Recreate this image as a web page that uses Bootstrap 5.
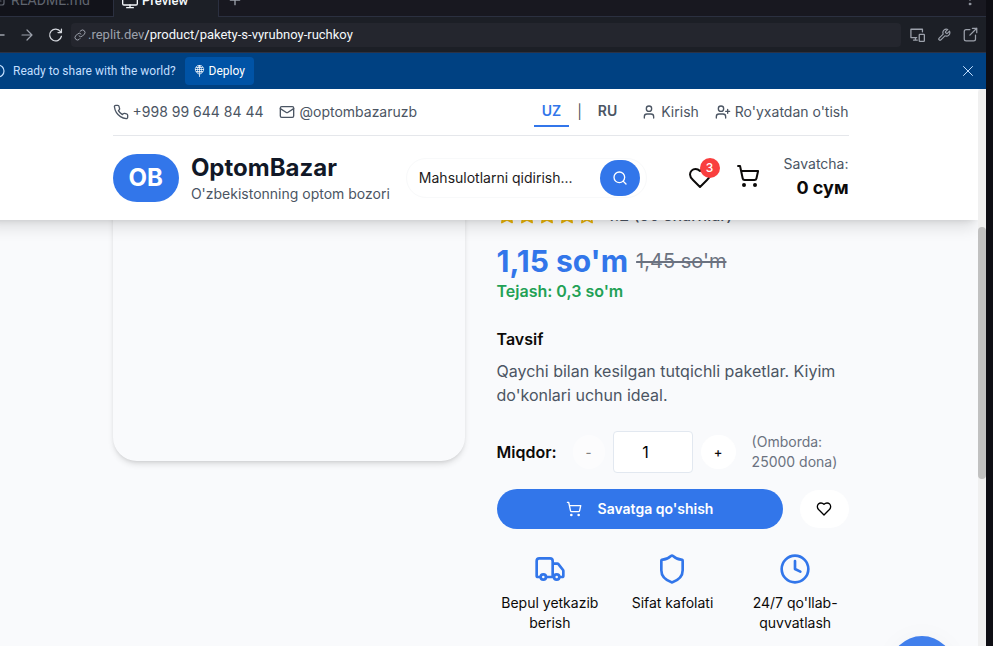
<!DOCTYPE html>
<html lang="uz">
<head>
<meta charset="utf-8">
<meta name="viewport" content="width=device-width, initial-scale=1">
<title>OptomBazar</title>
<link rel="stylesheet" href="https://cdn.jsdelivr.net/npm/bootstrap@5.3.0/dist/css/bootstrap.min.css">
<style>
:root { --brand: #3276ea; --ink: #111827; --muted: #4b5563; --chrome: #1c1f26; }
body { font-family: Inter, "Liberation Sans", sans-serif; font-size: 16px; line-height: 24px; color: #0c0a09; background: #0e0e14; }
svg { display: block; flex: none; fill: none; stroke: currentColor; stroke-width: 2; stroke-linecap: round; stroke-linejoin: round; }
svg .solid { fill: currentColor; }
button { font-family: inherit; }
a { color: inherit; text-decoration: none; }
.bare { background: none; border: 0; padding: 0; color: inherit; }
.ide { margin-right: 7px; font-family: Roboto, "Liberation Sans", sans-serif; }
.tab-strip { height: 17px; background: #181820; border-bottom: 1px solid #2b3040; color: #9ca1ab; font-size: 14px; line-height: 16px; }
.tab { height: 32px; padding-bottom: 8px; }
.tab-file { width: 113px; color: #60656f; background: #12131a; }
.tab-live { width: 106px; height: 33px; margin-bottom: -1px; padding-bottom: 8px; background: var(--chrome); color: #f5f9fc; border: solid #2b3040; border-width: 0 1px; }
.tab-live span { font-size: 13px; font-weight: 500; }
.address { height: 36px; background: var(--chrome); border-bottom: 1px solid #2b3245; color: #9ca1ab; }
.reload { color: #d5d8de; margin: 0 8px 0 15px; }
.url { height: 24px; background: #24262e; border-radius: 4px; padding: 0 3px; font-size: 13px; line-height: 24px; }
.url b { color: #f5f9fc; font-weight: 400; }
.url svg { margin-right: 2px; }
.banner { height: 36px; background: #004182; color: #c2dfff; font-size: 12px; line-height: 16px; }
.deploy { height: 28px; background: #0053a6; border: 0; border-radius: 4px; color: #fff; padding: 0 9px; margin-left: 9px; }
.viewport { min-height: 0; margin-right: 7px; background: #f9fafc; }
.page { margin-left: -17px; }
.track { width: 8px; background: #f0f0f0; border-radius: 4px 0 0 0; padding-top: 138px; }
.thumb { height: 252px; border-radius: 4px; background: #c1c1c1; }
.wrap { max-width: 768px; padding: 0 16px; margin: 0 auto; }
.site-head { background: #fff; box-shadow: 0 10px 15px -3px rgba(0,0,0,.12), 0 4px 6px -4px rgba(0,0,0,.12); z-index: 2; }
.t14 { font-size: 14px; line-height: 20px; }
.muted { color: var(--muted); }
.soft { color: #6b7280; }
.topbar { border-bottom: 1px solid #e5e7eb; }
.lang { border-bottom: 2px solid transparent; font-weight: 600; }
.lang.on { color: var(--brand); border-color: var(--brand); }
.logo { background: var(--brand); color: #fff; font-size: 24px; line-height: 32px; font-weight: 700; border-radius: 24px; padding: 8px 16px; }
.brand-name { font-size: 24px; line-height: 32px; font-weight: 700; color: var(--ink); margin: 0; }
.search { width: 241px; height: 40px; border: 1px solid #f8f9fa; border-radius: 20px; padding: 0 6px 0 12px; margin-left: 16px; }
.search input { border: 0; outline: 0; min-width: 0; padding: 0; background: none; color: #0c0a09; }
.search input::placeholder { color: #1d1b1b; opacity: 1; }
.go { flex: none; width: 40px; height: 36px; border: 0; border-radius: 18px; background: var(--brand); color: #fff; }
.count { position: absolute; top: -8px; right: -8px; width: 20px; height: 20px; border-radius: 10px; background: #f93e3e; color: #fff; font-size: 12px; line-height: 20px; font-weight: 500; }
.sum { font-size: 18px; line-height: 28px; font-weight: 700; }
.product { display: grid; grid-template-columns: 1fr 1fr; gap: 32px; margin-top: -17px; }
.photo { height: 258px; border-radius: 0 0 24px 24px; box-shadow: 0 4px 6px -1px rgba(0,0,0,.12), 0 2px 4px -2px rgba(0,0,0,.12); }
.stars { color: #eab308; }
.stars .full { fill: #facc15; }
.price { font-size: 30px; line-height: 36px; font-weight: 700; color: var(--brand); }
.old { font-size: 20px; line-height: 28px; color: #6b7280; }
.save { color: #22a155; font-weight: 600; }
.heading { font-size: 16px; line-height: 24px; font-weight: 600; margin: 0; }
.round { width: 35px; height: 34px; border: 0; border-radius: 17px; background: #fff; font-size: 13px; font-weight: 500; color: #0c0a09; padding: 0; }
.round:disabled { width: 32px; opacity: .5; }
.qty { width: 80px; height: 42px; border: 1px solid #e2e8f0; border-radius: 4px; background: #fff; padding: 0 14px 0 0; }
.buy { height: 40px; border: 0; border-radius: 20px; background: var(--brand); color: #fff; font-weight: 600; }
.wish { width: 49px; height: 38px; margin-left: 17px; border: 0; border-radius: 19px; background: #fff; padding: 0; }
.perks { display: grid; grid-template-columns: repeat(3, 1fr); gap: 16px; }
.perks svg { color: var(--brand); }
.chat { position: absolute; right: 24px; bottom: -54px; width: 64px; height: 64px; border: 0; border-radius: 32px; background: #417fec; box-shadow: 0 0 24px rgba(0,0,0,.03); }
</style>
<script src="https://cdn.jsdelivr.net/npm/bootstrap@5.3.0/dist/js/bootstrap.bundle.min.js"></script>
</head>
<body>
<div class="d-flex flex-column vh-100 overflow-hidden">
  <div class="ide flex-shrink-0">
    <div class="tab-strip d-flex align-items-end">
      <div class="tab tab-file d-flex align-items-end"><svg width="7" height="16" viewBox="0 0 7 16" class="me-1"><path stroke-width="1.200" d="M0 2h2a2 2 0 0 1 2 2v7a2 2 0 0 1-2 2H0M0 6h1M0 9h1"/></svg><span>README.md</span></div>
      <div class="tab tab-live d-flex align-items-end ps-1">
        <svg width="16" height="16" viewBox="0 0 24 24" class="ms-1 me-1"><rect x="1" y="3" width="22" height="15" rx="2"/><path d="M7 22h10M12 18v4"/></svg><span>Preview</span></div>
      <div class="tab d-flex align-items-end ps-2"><svg width="16" height="16" viewBox="0 0 24 24"><path d="M12 5v14M5 12h14"/></svg></div>
      <div class="tab d-flex align-items-end ms-auto pe-2"><svg width="16" height="16" viewBox="0 0 24 24"><g class="solid" stroke-width="1"><circle cx="12" cy="4" r="1.5"/><circle cx="12" cy="11" r="1.5"/><circle cx="12" cy="18" r="1.5"/></g></svg></div>
    </div>
    <div class="address d-flex align-items-center pe-2">
      <svg width="5" height="16" viewBox="0 0 5 16"><path d="M0 8h4" stroke-width="1.5"/></svg>
      <button class="bare ms-3" aria-label="Forward"><svg width="12" height="14" viewBox="0 0 12 14"><path stroke-width="1.200" d="M1 7h10M6 2l5 5-5 5"/></svg></button>
      <button class="bare reload" aria-label="Reload"><svg width="15" height="16" viewBox="0 0 24 24"><path d="M20 6.500A9.500 9.500 0 1 0 21.500 14M21.500 2.500V8H16"/></svg></button>
      <div class="url d-flex align-items-center flex-grow-1 me-2"><svg width="12" height="12" viewBox="0 0 24 24"><path d="M10 14a5 5 0 0 0 7 0l4-4a5 5 0 0 0-7-7l-2 2M14 10a5 5 0 0 0-7 0l-4 4a5 5 0 0 0 7 7l2-2"/></svg><span>.replit.dev<b>/product/pakety-s-vyrubnoy-ruchkoy</b></span></div>
      <div class="d-flex gap-2 align-items-center">
        <button class="bare" aria-label="Devices"><svg width="16" height="16" viewBox="0 0 25 24"><path d="M12 16H3V3h18v4M7 20h6M10 16v4"/><rect x="16" y="11" width="8" height="11" rx="1"/></svg></button>
        <button class="bare mx-1" aria-label="Tools"><svg width="14" height="14" viewBox="0 0 24 24"><path d="M14.700 6.300a1 1 0 0 0 0 1.400l1.600 1.600a1 1 0 0 0 1.400 0l3.800-3.800a6 6 0 0 1-7.900 7.900l-6.900 6.900a2.100 2.100 0 0 1-3-3l6.900-6.900a6 6 0 0 1 7.900-7.900z"/></svg></button>
        <button class="bare" aria-label="Open"><svg width="15" height="15" viewBox="0 0 24 24"><path d="M11 4H5a3 3 0 0 0-3 3v12a3 3 0 0 0 3 3h12a3 3 0 0 0 3-3v-6M15 2h7v7M22 2L11 13"/></svg></button>
      </div>
    </div>
    <div class="banner d-flex align-items-center pe-2">
      <svg width="5" height="14" viewBox="0 0 5 14" class="me-2"><circle cx="-2" cy="7" r="6" stroke-width="1.200"/></svg>
      <span>Ready to share with the world?</span>
      <button class="deploy d-flex align-items-center"><svg width="11" height="12" viewBox="0 0 22 24" class="me-1"><path stroke-width="1.500" d="M7 16.500a8.500 8.500 0 1 1 8 0M3 9h16M11 1v22M9 18C6 12 6 5 11 1M13 18c3-6 3-13-2-17M5 5h12M5 13h12"/></svg>Deploy</button>
      <button class="bare ms-auto me-1" aria-label="Close"><svg width="12" height="12" viewBox="0 0 24 24"><path d="M3 3l18 18M21 3L3 21"/></svg></button>
    </div>
  </div>

  <div class="viewport d-flex flex-grow-1">
    <div class="position-relative flex-grow-1 overflow-hidden">
      <div class="page">
        <header class="site-head position-relative">
          <div class="wrap">
            <div class="topbar d-flex justify-content-between align-items-center py-2 t14 muted">
              <div class="d-flex gap-3">
                <a href="#" class="d-flex align-items-center gap-1"><svg width="16" height="16" viewBox="0 0 24 24"><path d="M22 16.920v3a2 2 0 0 1-2.180 2 19.790 19.790 0 0 1-8.630-3.070 19.500 19.500 0 0 1-6-6 19.790 19.790 0 0 1-3.070-8.670A2 2 0 0 1 4.110 2h3a2 2 0 0 1 2 1.720c.127.960.361 1.903.700 2.810a2 2 0 0 1-.450 2.110L8.090 9.910a16 16 0 0 0 6 6l1.270-1.270a2 2 0 0 1 2.110-.450c.907.339 1.850.573 2.810.700A2 2 0 0 1 22 16.920z"/></svg>+998 99 644 84 44</a>
                <a href="#" class="d-flex align-items-center gap-1"><svg width="16" height="16" viewBox="0 0 24 24"><rect x="2" y="4" width="20" height="16" rx="2"/><path d="m22 7-8.970 5.700a1.940 1.940 0 0 1-2.060 0L2 7"/></svg>@optombazaruzb</a>
              </div>
              <div class="d-flex gap-3 align-items-center">
                <div class="d-flex gap-2 align-items-center">
                  <a href="#" class="lang on px-2 py-1">UZ</a><span>|</span><a href="#" class="lang px-2 py-1">RU</a>
                </div>
                <a href="#" class="d-flex align-items-center gap-1"><svg width="16" height="16" viewBox="0 0 24 24"><path d="M19 21v-2a4 4 0 0 0-4-4H9a4 4 0 0 0-4 4v2"/><circle cx="12" cy="7" r="4"/></svg>Kirish</a>
                <a href="#" class="d-flex align-items-center gap-1"><svg width="16" height="16" viewBox="0 0 24 24"><path d="M16 21v-2a4 4 0 0 0-4-4H6a4 4 0 0 0-4 4v2M19 8v6M22 11h-6"/><circle cx="9" cy="7" r="4"/></svg>Ro'yxatdan o'tish</a>
              </div>
            </div>
            <div class="d-flex align-items-center py-3">
              <a href="#" class="logo">OB</a>
              <div class="ms-2 ps-1 text-nowrap"><h1 class="brand-name">OptomBazar</h1><div class="t14 muted">O'zbekistonning optom bozori</div></div>
              <form class="search d-flex align-items-center">
                <input type="text" class="t14 flex-grow-1" placeholder="Mahsulotlarni qidirish..." aria-label="Mahsulotlarni qidirish">
                <button type="button" class="go d-flex align-items-center justify-content-center p-0" aria-label="Qidirish"><svg width="16" height="16" viewBox="0 0 24 24"><circle cx="11" cy="11" r="8"/><path d="m21 21-4.300-4.300"/></svg></button>
              </form>
              <div class="d-flex align-items-center gap-4 ms-auto">
                <button class="bare position-relative" aria-label="Sevimlilar"><svg width="24" height="24" viewBox="0 0 24 24"><path d="M19 14c1.490-1.460 3-3.210 3-5.500A5.500 5.500 0 0 0 16.500 3c-1.760 0-3 .500-4.500 2-1.500-1.500-2.740-2-4.500-2A5.500 5.500 0 0 0 2 8.500c0 2.300 1.500 4.050 3 5.500l7 7Z"/></svg><span class="count">3</span></button>
                <button class="bare pb-1" aria-label="Savatcha"><svg width="24" height="24" viewBox="0 0 24 24"><circle cx="8" cy="21" r="1"/><circle cx="19" cy="21" r="1"/><path d="M2.050 2.050h2l2.660 12.420a2 2 0 0 0 2 1.580h9.780a2 2 0 0 0 1.950-1.570l1.650-7.430H5.120"/></svg></button>
                <div class="text-end"><div class="t14 muted">Savatcha:</div><div class="sum">0 сум</div></div>
              </div>
            </div>
          </div>
        </header>

        <main class="wrap product">
          <div class="photo"></div>
          <div>
            <div class="d-flex align-items-center mb-3">
              <div class="stars d-flex me-2">
                <svg width="20" height="20" viewBox="0 0 24 24" class="full"><path d="M12 2l3.090 6.260L22 9.270l-5 4.870 1.180 6.880L12 17.770l-6.180 3.250L7 14.140 2 9.270l6.910-1.010z"/></svg>
                <svg width="20" height="20" viewBox="0 0 24 24" class="full"><path d="M12 2l3.090 6.260L22 9.270l-5 4.870 1.180 6.880L12 17.770l-6.180 3.250L7 14.140 2 9.270l6.910-1.010z"/></svg>
                <svg width="20" height="20" viewBox="0 0 24 24" class="full"><path d="M12 2l3.090 6.260L22 9.270l-5 4.870 1.180 6.880L12 17.770l-6.180 3.250L7 14.140 2 9.270l6.910-1.010z"/></svg>
                <svg width="20" height="20" viewBox="0 0 24 24" class="full"><path d="M12 2l3.090 6.260L22 9.270l-5 4.870 1.180 6.880L12 17.770l-6.180 3.250L7 14.140 2 9.270l6.910-1.010z"/></svg>
                <svg width="20" height="20" viewBox="0 0 24 24"><path d="M12 2l3.090 6.260L22 9.270l-5 4.870 1.180 6.880L12 17.770l-6.180 3.250L7 14.140 2 9.270l6.910-1.010z"/></svg>
              </div>
              <span class="muted fw-medium">4.2 (50 sharhlar)</span>
            </div>
            <div class="d-flex align-items-center gap-2"><span class="price">1,15 so'm</span><s class="old">1,45 so'm</s></div>
            <div class="save mb-4">Tejash: 0,3 so'm</div>
            <h2 class="heading mb-2">Tavsif</h2>
            <p class="muted mb-4">Qaychi bilan kesilgan tutqichli paketlar. Kiyim do'konlari uchun ideal.</p>
            <div class="d-flex align-items-center gap-3 mb-3">
              <label for="qty" class="heading">Miqdor:</label>
              <div class="d-flex align-items-center gap-2 flex-shrink-0">
                <button class="round" disabled>-</button>
                <input id="qty" class="qty text-center" type="text" value="1">
                <button class="round">+</button>
              </div>
              <span class="t14 soft">(Omborda: 25000 dona)</span>
            </div>
            <div class="d-flex align-items-center mb-4">
              <button class="buy t14 d-flex align-items-center justify-content-center flex-grow-1 gap-3"><svg width="16" height="16" viewBox="0 0 24 24"><circle cx="8" cy="21" r="1"/><circle cx="19" cy="21" r="1"/><path d="M2.050 2.050h2l2.660 12.420a2 2 0 0 0 2 1.580h9.780a2 2 0 0 0 1.950-1.570l1.650-7.430H5.120"/></svg>Savatga qo'shish</button>
              <button class="wish d-flex align-items-center justify-content-center" aria-label="Sevimlilarga"><svg width="16" height="16" viewBox="0 0 24 24"><path d="M19 14c1.490-1.460 3-3.210 3-5.500A5.500 5.500 0 0 0 16.500 3c-1.760 0-3 .500-4.500 2-1.500-1.500-2.740-2-4.500-2A5.500 5.500 0 0 0 2 8.500c0 2.300 1.500 4.050 3 5.500l7 7Z"/></svg></button>
            </div>
            <div class="perks t14 text-center">
              <div><svg width="32" height="32" viewBox="0 0 24 24" class="mx-auto mb-2"><path d="M14 18V6a2 2 0 0 0-2-2H4a2 2 0 0 0-2 2v11a1 1 0 0 0 1 1h2M15 18H9M19 18h2a1 1 0 0 0 1-1v-3.650a1 1 0 0 0-.220-.624l-3.480-4.350A1 1 0 0 0 17.520 8H14"/><circle cx="17" cy="18" r="2"/><circle cx="7" cy="18" r="2"/></svg>Bepul yetkazib berish</div>
              <div><svg width="32" height="32" viewBox="0 0 24 24" class="mx-auto mb-2"><path d="M20 13c0 5-3.500 7.500-7.660 8.950a1 1 0 0 1-.670-.010C7.500 20.500 4 18 4 13V6a1 1 0 0 1 1-1c2 0 4.500-1.200 6.240-2.720a1.170 1.170 0 0 1 1.520 0C14.510 3.810 17 5 19 5a1 1 0 0 1 1 1z"/></svg>Sifat kafolati</div>
              <div><svg width="32" height="32" viewBox="0 0 24 24" class="mx-auto mb-2"><circle cx="12" cy="12" r="10"/><path d="M12 6v6l4 2"/></svg>24/7 qo'llab-quvvatlash</div>
            </div>
          </div>
        </main>
      </div>
      <button class="chat" aria-label="Chat"></button>
    </div>
    <div class="track"><div class="thumb"></div></div>
  </div>
</div>
</body>
</html>
